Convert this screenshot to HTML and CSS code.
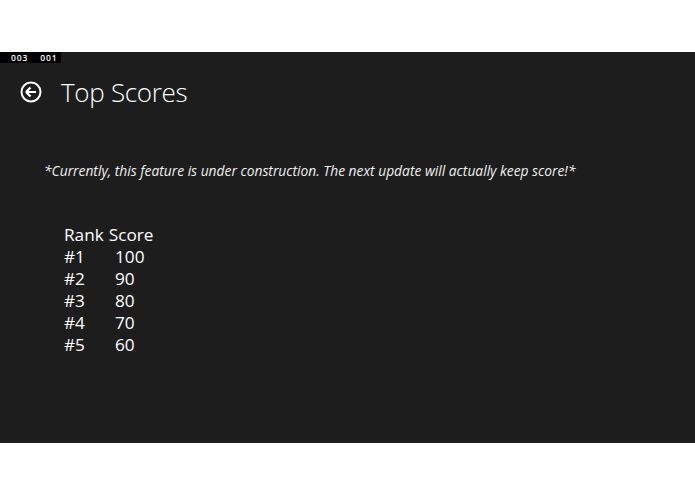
FILE: index.html
```html
<!DOCTYPE html>
<html>
<head>
<meta charset="utf-8">
<link rel="stylesheet" href="styles.css">
</head>
<body>
<div class="top-band"></div>
<main class="app">
  <div class="counter"><span>003</span><span>001</span></div>
  <header class="header">
    <svg class="back" width="22" height="22" viewBox="0 0 22 22">
      <circle cx="11" cy="11" r="9.5" fill="none" stroke="#fff" stroke-width="2"/>
      <path d="M6 11 L10.5 6.5 M6 11 L10.5 15.5 M6 11 H16" fill="none" stroke="#fff" stroke-width="2.2"/>
    </svg>
    <h1 class="title">Top Scores</h1>
  </header>
  <p class="notice">*Currently, this feature is under construction. The next update will actually keep score!*</p>
  <div class="scores">
    <div class="row head"><span class="rank">Rank</span><span class="score">Score</span></div>
    <div class="row"><span class="rank">#1</span><span class="score">100</span></div>
    <div class="row"><span class="rank">#2</span><span class="score">90</span></div>
    <div class="row"><span class="rank">#3</span><span class="score">80</span></div>
    <div class="row"><span class="rank">#4</span><span class="score">70</span></div>
    <div class="row"><span class="rank">#5</span><span class="score">60</span></div>
  </div>
</main>
</body>
</html>
```
FILE: styles.css
```css
html, body {
  margin: 0;
  padding: 0;
  background: #ffffff;
  font-family: "Open Sans", "Noto Sans", sans-serif;
}
.top-band {
  height: 52px;
}
.app {
  height: 391px;
  background: #1d1d1d;
  color: #ffffff;
  position: relative;
  overflow: hidden;
}
.counter {
  position: absolute;
  left: 0;
  top: 0;
  width: 61px;
  height: 11px;
  background: #000;
  color: #fff;
  font-size: 8.5px;
  line-height: 11px;
  letter-spacing: 0.9px;
  font-family: "Open Sans", sans-serif;
  font-weight: 600;
  display: flex;
  align-items: center;
  gap: 12px;
  padding-left: 11px;
  box-sizing: border-box;
}
.header {
  display: flex;
  align-items: center;
  padding-top: 23px;
  padding-left: 20px;
}
.back {
  display: block;
}
.title {
  margin: 0 0 0 19px;
  font-size: 26px;
  font-weight: 300;
  line-height: 34px;
  letter-spacing: -0.3px;
}
.notice {
  margin: 52px 0 0 44px;
  font-size: 13.8px;
  font-style: italic;
  line-height: 20px;
  color: #f0f0f0;
}
.scores {
  margin: 43px 0 0 64px;
  font-size: 17.2px;
  line-height: 22px;
}
.row {
  display: flex;
}
.rank {
  width: 51px;
}
.head .rank {
  width: auto;
  margin-right: 5px;
}
```
